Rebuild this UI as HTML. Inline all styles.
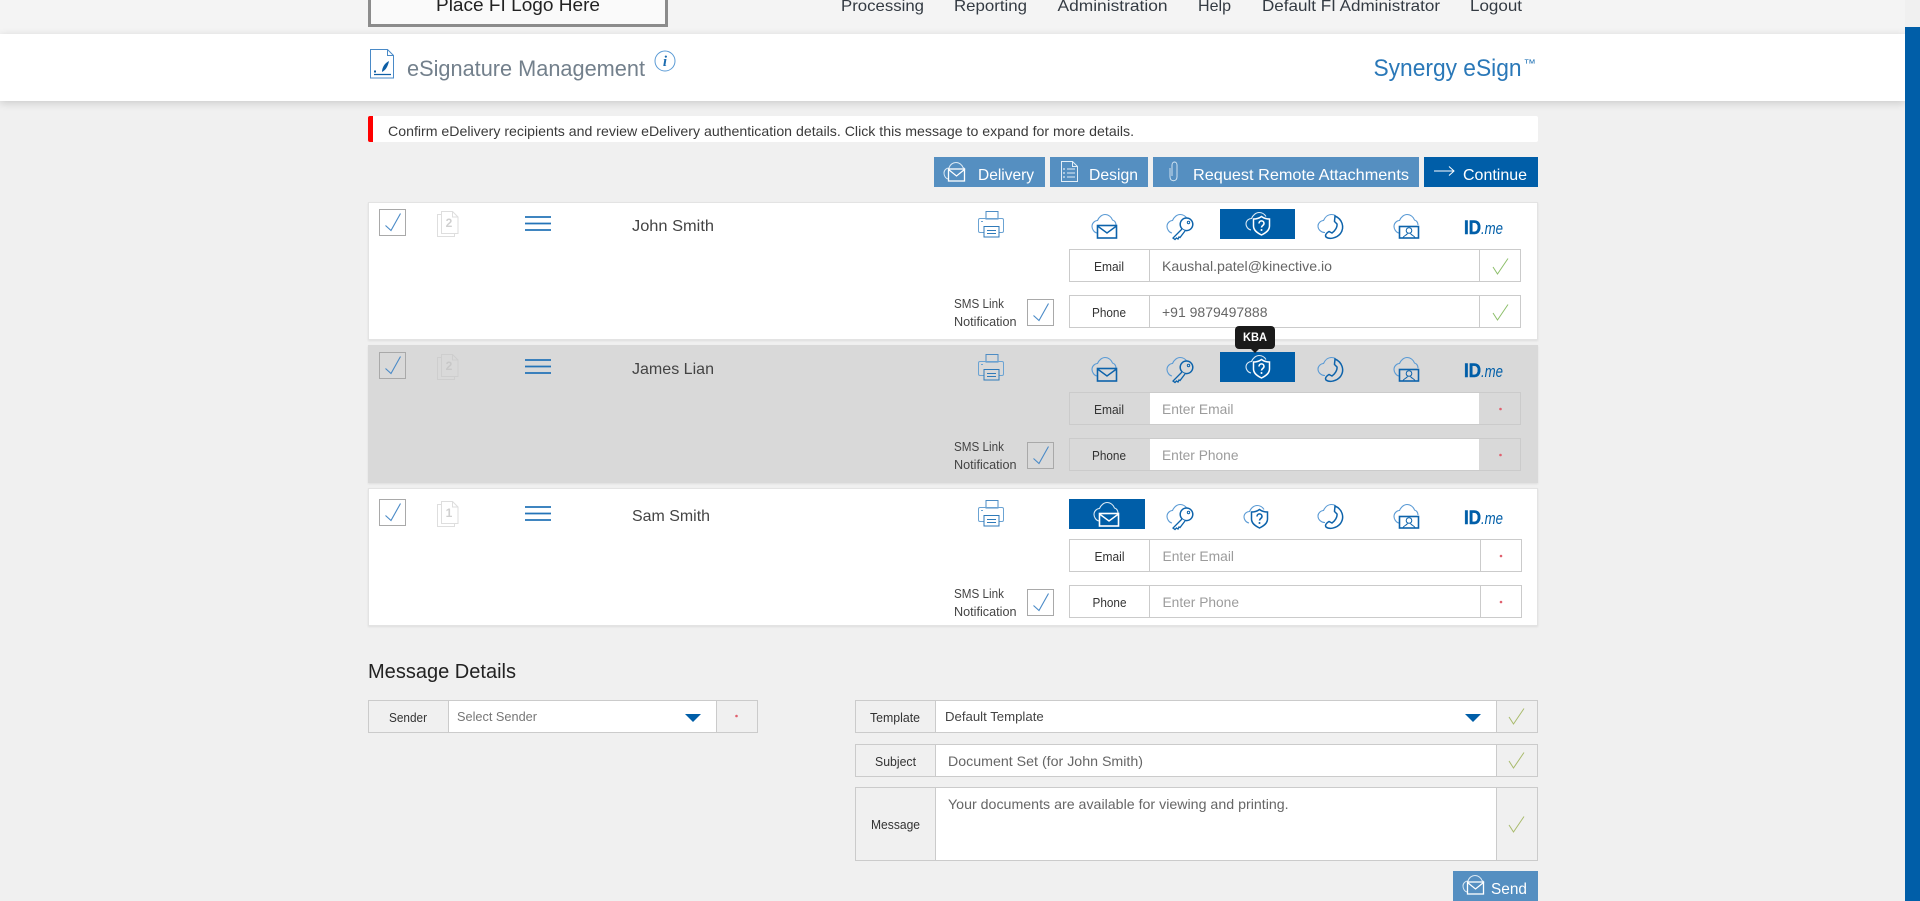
<!DOCTYPE html>
<html lang="en"><head><meta charset="utf-8"><title>eSignature Management</title>
<style>
html,body{margin:0;padding:0;width:1920px;height:901px;overflow:hidden;background:#f0f0f0;font-family:"Liberation Sans",sans-serif}
.b{position:absolute;box-sizing:border-box}
.f{border:1px solid #cbcbcb}
.card{background:#fff;border:1px solid #e3e3e3;box-shadow:0 1px 2px rgba(0,0,0,.08)}
.btn{background:#558fc1;height:30px;top:157px}
.cb{width:27px;height:27px;border:1px solid #a9a9a9}
svg{position:absolute;left:0;top:0}
text{font-family:"Liberation Sans",sans-serif}
.n{font-size:16px;fill:#333a42}
.h{font-size:16px;fill:#444}
.lb{font-size:13px;fill:#333}
.v{font-size:14px;fill:#666}
.p{font-size:14px;fill:#9c9c9c}
.s{font-size:12.5px;fill:#444}
.w{font-size:16px;fill:#fff}
</style></head><body>
<div class="b" style="left:0;top:0;width:1905px;height:34px;background:#f4f4f4"></div>
<div class="b" style="left:368px;top:-10px;width:300px;height:37px;border:3px solid #8c8c8c;background:#fafafa"></div>
<div class="b" style="left:0;top:34px;width:1905px;height:67px;background:#fff;box-shadow:0 2px 8px rgba(0,0,0,.16)"></div>
<div class="b" style="left:1905px;top:0;width:15px;height:27px;background:#f0f0f0"></div>
<div class="b" style="left:1905px;top:27px;width:15px;height:874px;background:#005ea8"></div>
<div class="b" style="left:368px;top:116px;width:1170px;height:26px;background:#fff;border-radius:2px"></div>
<div class="b" style="left:368px;top:116px;width:5px;height:26px;background:#f00;border-radius:2px 0 0 2px"></div>
<div class="b btn" style="left:934px;width:111px"></div>
<div class="b btn" style="left:1050px;width:98px"></div>
<div class="b btn" style="left:1153px;width:266px"></div>
<div class="b btn" style="left:1424px;width:114px;background:#005ea8"></div>

<div class="b card" style="left:368px;top:202px;width:1170px;height:138px"></div>
<div class="b" style="left:368px;top:345px;width:1170px;height:138px;background:#d9d9d9;box-shadow:0 1px 2px rgba(0,0,0,.08)"></div>
<div class="b card" style="left:368px;top:488px;width:1170px;height:138px"></div>

<div class="b cb" style="left:379px;top:209px"></div>
<div class="b cb" style="left:379px;top:352px"></div>
<div class="b cb" style="left:379px;top:499px"></div>
<div class="b cb" style="left:1027px;top:299px"></div>
<div class="b cb" style="left:1027px;top:442px"></div>
<div class="b cb" style="left:1027px;top:589px"></div>

<div class="b" style="left:1220px;top:209px;width:75px;height:30px;background:#005ea8"></div>
<div class="b" style="left:1220px;top:352px;width:75px;height:30px;background:#005ea8"></div>
<div class="b" style="left:1069px;top:499px;width:76px;height:30px;background:#005ea8"></div>

<!-- row 1 fields -->
<div class="b f" style="left:1069px;top:249px;width:452px;height:33px;background:#fff"></div>
<div class="b f" style="left:1069px;top:295px;width:452px;height:33px;background:#fff"></div>
<div class="b" style="left:1149px;top:249px;width:1px;height:33px;background:#cbcbcb"></div>
<div class="b" style="left:1479px;top:249px;width:1px;height:33px;background:#cbcbcb"></div>
<div class="b" style="left:1149px;top:295px;width:1px;height:33px;background:#cbcbcb"></div>
<div class="b" style="left:1479px;top:295px;width:1px;height:33px;background:#cbcbcb"></div>
<!-- row 2 fields -->
<div class="b f" style="left:1069px;top:392px;width:452px;height:33px"></div>
<div class="b f" style="left:1069px;top:438px;width:452px;height:33px"></div>
<div class="b" style="left:1150px;top:393px;width:329px;height:31px;background:#fff"></div>
<div class="b" style="left:1150px;top:439px;width:329px;height:31px;background:#fff"></div>
<!-- row 3 fields -->
<div class="b f" style="left:1069px;top:539px;width:453px;height:33px;background:#fff"></div>
<div class="b f" style="left:1069px;top:585px;width:453px;height:33px;background:#fff"></div>
<div class="b" style="left:1149px;top:539px;width:1px;height:33px;background:#cbcbcb"></div>
<div class="b" style="left:1480px;top:539px;width:1px;height:33px;background:#cbcbcb"></div>
<div class="b" style="left:1149px;top:585px;width:1px;height:33px;background:#cbcbcb"></div>
<div class="b" style="left:1480px;top:585px;width:1px;height:33px;background:#cbcbcb"></div>
<!-- message fields -->
<div class="b f" style="left:368px;top:700px;width:390px;height:33px"></div>
<div class="b" style="left:448px;top:700px;width:269px;height:33px;background:#fff;border:1px solid #cbcbcb"></div>
<div class="b f" style="left:855px;top:700px;width:683px;height:33px"></div>
<div class="b" style="left:935px;top:700px;width:562px;height:33px;background:#fff;border:1px solid #cbcbcb"></div>
<div class="b f" style="left:855px;top:744px;width:683px;height:33px"></div>
<div class="b" style="left:935px;top:744px;width:562px;height:33px;background:#fff;border:1px solid #cbcbcb"></div>
<div class="b f" style="left:855px;top:787px;width:683px;height:74px"></div>
<div class="b" style="left:935px;top:787px;width:562px;height:74px;background:#fff;border:1px solid #cbcbcb"></div>
<div class="b" style="left:1453px;top:871px;width:85px;height:30px;background:#558fc1"></div>
<!-- tooltip -->
<div class="b" style="left:1235px;top:326px;width:40px;height:23px;background:#1a1a1a;border-radius:4px"></div>
<div class="b" style="left:1251px;top:349px;width:0;height:0;border-left:4px solid transparent;border-right:4px solid transparent;border-top:4px solid #1a1a1a"></div>

<svg width="1920" height="901" viewBox="0 0 1920 901" fill="none">
<defs>
<symbol id="mail" overflow="visible"><path d="M5 20C2 19.500 0 16 0 13.500 0 10 3 7.500 5.500 7.500 7 4 10 1.500 13 1.500c3.500 0 6.500 2.500 7.500 5.500 2 .5 3.500 2.500 3.500 5" stroke="var(--a)" stroke-width="1.100"/><rect x="5.500" y="12.500" width="19" height="12.500" stroke="var(--b)" stroke-width="1.600" fill="var(--f)"/><path d="M5.500 13L15 20l9.500-7" stroke="var(--b)" stroke-width="1.400"/></symbol>
<symbol id="key" overflow="visible"><path d="M5 20C2 19.500 0 16 0 13.500 0 10 3 7.500 5.500 7.500 7 4 10 1.500 13 1.500c3 0 5.500 1.500 7 4" stroke="var(--a)" stroke-width="1.100"/><circle cx="19.500" cy="11.300" r="6.300" stroke="var(--b)" stroke-width="1.500" fill="var(--f)"/><circle cx="21.500" cy="9.500" r="1.200" stroke="var(--b)"/><path d="M15 16L6 25l2 1.500 1.500-1.500 1.500 1 1-2 1 .5 5-6.500" stroke="var(--b)" stroke-width="1.300" fill="var(--f)"/></symbol>
<symbol id="kba" overflow="visible"><path d="M5 18C2 17.500 0 14.500 0 12 0 8.500 3 6.500 5.500 6.500 7 3 10 .5 13 .5c3 0 5.500 1.500 7 4" stroke="var(--a)" stroke-width="1.100"/><path d="M15.500 4.500c2 1.500 5 2.500 8 2.500v7c0 4-3 6.500-8 9-5-2.500-8-5-8-9V7c3 0 6-1 8-2.500z" stroke="var(--b)" stroke-width="1.500" fill="var(--f)"/><path d="M13 11.500c0-3.500 5-3.500 5 0 0 2-2.500 2-2.500 4" stroke="var(--b)" stroke-width="1.600"/><circle cx="15.500" cy="18" r="1" fill="var(--b)"/></symbol>
<symbol id="tel" overflow="visible"><path d="M7 19.500C3 19.500 0 16.500 0 13 0 10 3 7.500 5.500 7.500 7 4 10 1.500 13.500 1.500c1.500 0 3 .5 4 1" stroke="var(--a)" stroke-width="1.100"/><path d="M17 3c7 3 10 11 5.500 17.500C18.500 25.500 11 26.500 8 24c-1.500-2 1-4.500 3-5.500l3 1.500c3-2 5.500-6 5-9l-2.500-2.500c0-2 .5-4 .5-5.500z" stroke="var(--b)" stroke-width="1.500" fill="var(--f)"/></symbol>
<symbol id="usr" overflow="visible"><path d="M5 20C2 19.500 0 16 0 13.500 0 10 3 7.500 5.500 7.500 7 4 10 1.500 13 1.500c3.500 0 6.500 2.500 7.500 5.500 2 .5 3.500 2.500 3.500 5" stroke="var(--a)" stroke-width="1.100"/><rect x="5.500" y="13.500" width="19" height="11.500" stroke="var(--b)" stroke-width="1.600" fill="var(--f)"/><circle cx="15" cy="17.500" r="2.800" stroke="var(--b)"/><path d="M9 25c.5-2.500 3.500-2.500 4.500-4.500m7.500 4.500c-.5-2.500-3.500-2.500-4.500-4.500" stroke="var(--b)"/></symbol>
<symbol id="prn" overflow="visible"><rect x="8" y=".5" width="12" height="7.500" stroke="#4d8cc4"/><rect x=".5" y="7.500" width="25" height="14" rx="1.500" stroke="#6ba3d3"/><rect x="6" y="15.500" width="15" height="10.500" fill="var(--f)" stroke="#2f7ab9"/><path d="M9 19.500h9M9 22.500h9" stroke="#2f7ab9"/><path d="M3 10.500h2" stroke="#6ba3d3"/></symbol>
<symbol id="ham" overflow="visible"><path d="M0 1h26M0 7.500h26M0 14h26" stroke="#2474b8" stroke-width="1.800"/></symbol>
<symbol id="chk" overflow="visible"><path d="M6.500 16.500l5.500 5L21.500 4.500" stroke="#4a8ac7" stroke-width="1.100"/></symbol>
<symbol id="ok" overflow="visible"><path d="M0 9l4.500 7L15 .5" stroke="var(--g)" stroke-width="1"/></symbol>
<symbol id="wmail" overflow="visible"><path d="M4 17C1.500 16.500 0 13.500 0 11 0 8 2.500 6 5 6 6 2.500 9 .5 12 .5c3.500 0 6 2.500 7 5 1 .5 1.500 1 2 2" stroke="#dbe9f4"/><rect x="4.500" y="7" width="16" height="12" stroke="#fff" stroke-width="1.300" fill="#558fc1"/><path d="M4.500 7.500l8 6.500 8-6.500" stroke="#fff" stroke-width="1.200"/></symbol>
</defs>

<g font-family="Liberation Sans">
<text x="436" y="11" textLength="164" lengthAdjust="spacingAndGlyphs" font-size="18" fill="#222">Place FI Logo Here</text>
<text class="n" x="841" y="11" textLength="83" lengthAdjust="spacingAndGlyphs">Processing</text>
<text class="n" x="954" y="11" textLength="73" lengthAdjust="spacingAndGlyphs">Reporting</text>
<text class="n" x="1057.500" y="11" textLength="110" lengthAdjust="spacingAndGlyphs">Administration</text>
<text class="n" x="1198" y="11" textLength="33" lengthAdjust="spacingAndGlyphs">Help</text>
<text class="n" x="1262" y="11" textLength="178" lengthAdjust="spacingAndGlyphs">Default FI Administrator</text>
<text class="n" x="1470" y="11" textLength="52" lengthAdjust="spacingAndGlyphs">Logout</text>

<text x="407" y="76" textLength="238" lengthAdjust="spacingAndGlyphs" font-size="22" fill="#73808c">eSignature Management</text>
<text x="1373.500" y="76" textLength="148" lengthAdjust="spacingAndGlyphs" font-size="24" fill="#2a78b8">Synergy eSign</text>
<text x="1523.500" y="67" textLength="12.500" lengthAdjust="spacingAndGlyphs" font-size="11" fill="#2a78b8">™</text>

<text x="388" y="136" textLength="746" lengthAdjust="spacingAndGlyphs" font-size="14" fill="#3a3a3a">Confirm eDelivery recipients and review eDelivery authentication details. Click this message to expand for more details.</text>

<text class="w" x="978" y="180" textLength="56" lengthAdjust="spacingAndGlyphs">Delivery</text>
<text class="w" x="1089" y="180" textLength="49" lengthAdjust="spacingAndGlyphs">Design</text>
<text class="w" x="1193" y="180" textLength="216" lengthAdjust="spacingAndGlyphs">Request Remote Attachments</text>
<text class="w" x="1463" y="180" textLength="64" lengthAdjust="spacingAndGlyphs">Continue</text>

<text class="h" x="632" y="231" textLength="82" lengthAdjust="spacingAndGlyphs">John Smith</text>
<text class="h" x="632" y="374" textLength="82" lengthAdjust="spacingAndGlyphs">James Lian</text>
<text class="h" x="632" y="521" textLength="78" lengthAdjust="spacingAndGlyphs">Sam Smith</text>

<text class="lb" x="1094" y="271" textLength="30" lengthAdjust="spacingAndGlyphs">Email</text>
<text class="lb" x="1092" y="317" textLength="34" lengthAdjust="spacingAndGlyphs">Phone</text>
<text class="lb" x="1094" y="414" textLength="30" lengthAdjust="spacingAndGlyphs">Email</text>
<text class="lb" x="1092" y="460" textLength="34" lengthAdjust="spacingAndGlyphs">Phone</text>
<text class="lb" x="1094.500" y="561" textLength="30" lengthAdjust="spacingAndGlyphs">Email</text>
<text class="lb" x="1092.500" y="607" textLength="34" lengthAdjust="spacingAndGlyphs">Phone</text>

<text class="v" x="1162" y="271" textLength="170" lengthAdjust="spacingAndGlyphs">Kaushal.patel@kinective.io</text>
<text class="v" x="1162" y="317" textLength="105.500" lengthAdjust="spacingAndGlyphs">+91 9879497888</text>
<text class="p" x="1162" y="414" textLength="71.500" lengthAdjust="spacingAndGlyphs">Enter Email</text>
<text class="p" x="1162" y="460" textLength="76.500" lengthAdjust="spacingAndGlyphs">Enter Phone</text>
<text class="p" x="1162.500" y="561" textLength="71.500" lengthAdjust="spacingAndGlyphs">Enter Email</text>
<text class="p" x="1162.500" y="607" textLength="76.500" lengthAdjust="spacingAndGlyphs">Enter Phone</text>

<text class="s" x="954" y="308" textLength="50" lengthAdjust="spacingAndGlyphs">SMS Link</text>
<text class="s" x="954" y="326" textLength="62.500" lengthAdjust="spacingAndGlyphs">Notification</text>
<text class="s" x="954" y="451" textLength="50" lengthAdjust="spacingAndGlyphs">SMS Link</text>
<text class="s" x="954" y="469" textLength="62.500" lengthAdjust="spacingAndGlyphs">Notification</text>
<text class="s" x="954" y="598" textLength="50" lengthAdjust="spacingAndGlyphs">SMS Link</text>
<text class="s" x="954" y="616" textLength="62.500" lengthAdjust="spacingAndGlyphs">Notification</text>

<text x="1243" y="341" textLength="24" lengthAdjust="spacingAndGlyphs" font-size="12" font-weight="bold" fill="#fff">KBA</text>

<text x="368" y="678" textLength="148" lengthAdjust="spacingAndGlyphs" font-size="20" fill="#222">Message Details</text>
<text class="lb" x="389" y="722" textLength="38" lengthAdjust="spacingAndGlyphs" fill="#222">Sender</text>
<text x="457" y="721" textLength="80" lengthAdjust="spacingAndGlyphs" font-size="13" fill="#777">Select Sender</text>
<text class="lb" x="870" y="722" textLength="50" lengthAdjust="spacingAndGlyphs">Template</text>
<text x="945" y="721" textLength="98.700" lengthAdjust="spacingAndGlyphs" font-size="13" fill="#444">Default Template</text>
<text class="lb" x="875" y="766" textLength="41" lengthAdjust="spacingAndGlyphs">Subject</text>
<text class="v" x="948" y="766" textLength="195" lengthAdjust="spacingAndGlyphs">Document Set (for John Smith)</text>
<text class="lb" x="871" y="829" textLength="49" lengthAdjust="spacingAndGlyphs">Message</text>
<text class="v" x="948" y="809" textLength="340.600" lengthAdjust="spacingAndGlyphs">Your documents are available for viewing and printing.</text>
<text class="w" x="1491" y="894" textLength="36" lengthAdjust="spacingAndGlyphs">Send</text>

<!-- ID.me -->
<g fill="#005ea8" stroke="#005ea8" stroke-width=".5">
<text x="1464" y="234" textLength="17" lengthAdjust="spacingAndGlyphs" font-size="19" font-weight="bold">ID</text>
<text x="1464" y="377" textLength="17" lengthAdjust="spacingAndGlyphs" font-size="19" font-weight="bold">ID</text>
<text x="1464" y="524" textLength="17" lengthAdjust="spacingAndGlyphs" font-size="19" font-weight="bold">ID</text>
</g>
<g fill="#005ea8">
<text x="1481" y="234" textLength="22" lengthAdjust="spacingAndGlyphs" font-size="17" font-style="italic">.me</text>
<text x="1481" y="377" textLength="22" lengthAdjust="spacingAndGlyphs" font-size="17" font-style="italic">.me</text>
<text x="1481" y="524" textLength="22" lengthAdjust="spacingAndGlyphs" font-size="17" font-style="italic">.me</text>
</g>
</g>

<!-- header icons -->
<g stroke-width="1">
<path d="M370.500 49.500h17l6 6v22.500h-23z" stroke="#4a8ac7"/><path d="M387.500 49.500v6h6" stroke="#4a8ac7"/>
<path d="M382 72c0-5 3-9 7-11-1 5-3 9-7 11z" fill="#0d5ea5"/><path d="M374 74.500h17" stroke="#0d5ea5" stroke-width="1.300"/><path d="M374 71.500h2" stroke="#0d5ea5" stroke-width="2"/>
<circle cx="665" cy="61" r="10" stroke="#5b9bd5"/>
</g>
<text x="665" y="66" text-anchor="middle" style="font-family:'Liberation Serif',serif" font-size="15" font-style="italic" font-weight="bold" fill="#1c6cb0">i</text>

<!-- button icons -->
<use href="#wmail" x="944" y="162"/>
<use href="#wmail" x="1463" y="875"/>
<g stroke="#e3eef7" stroke-width="1">
<path d="M1061.500 161.500h11l5 5v15h-16zM1072.500 161.500v5h5"/>
<path d="M1067 169h8M1067 173h8M1067 177h8"/><path d="M1063 169h2M1063 173h2M1063 177h2" stroke="#fff"/>
<path d="M1170 168v9c0 5 7 5 7 0v-12c0-4-5-4-5 0v11" stroke="#dcebf6" stroke-width=".9"/>
<path d="M1434 171h20M1449 166.500l5 4.500-5 4.500" stroke="#fff"/>
</g>

<!-- checkbox ticks -->
<use href="#chk" x="379" y="209"/><use href="#chk" x="379" y="352"/><use href="#chk" x="379" y="499"/>
<use href="#chk" x="1027" y="299"/><use href="#chk" x="1027" y="442"/><use href="#chk" x="1027" y="589"/>

<!-- doc count icons -->
<g stroke="#dedede" fill="#fff"><path d="M437.500 214.500h4v19h13v3h-17z" fill="none"/><path d="M441.500 211.500h11l5.500 5.500v16.500h-16.500z"/><path d="M452.500 211.500v5.500h5.500" fill="none"/></g>
<text x="449" y="227" text-anchor="middle" font-size="12" font-weight="bold" fill="#d0d0d0">2</text>
<g stroke="#cecece"><path d="M437.500 357.500h4v19h13v3h-17z"/><path d="M441.500 354.500h11l5.500 5.500v16.500h-16.500z"/><path d="M452.500 354.500v5.500h5.500"/></g>
<text x="449" y="370" text-anchor="middle" font-size="12" font-weight="bold" fill="#c8c8c8">2</text>
<g stroke="#dedede" fill="#fff"><path d="M437.500 504.500h4v19h13v3h-17z" fill="none"/><path d="M441.500 501.500h11l5.500 5.500v16.500h-16.500z"/><path d="M452.500 501.500v5.500h5.500" fill="none"/></g>
<text x="449" y="517" text-anchor="middle" font-size="12" font-weight="bold" fill="#d0d0d0">1</text>

<!-- hamburger -->
<use href="#ham" x="525" y="216"/><use href="#ham" x="525" y="359"/><use href="#ham" x="525" y="506"/>

<!-- printers -->
<use href="#prn" x="978" y="211" style="--f:#fff"/><use href="#prn" x="978" y="354" style="--f:#d9d9d9"/><use href="#prn" x="978" y="500" style="--f:#fff"/>

<!-- delivery icons row 1 -->
<g style="--a:#5b9bd5;--b:#0d63ab;--f:#fff">
<use href="#mail" x="1092" y="213"/><use href="#key" x="1167" y="213"/><use href="#tel" x="1318" y="213"/><use href="#usr" x="1394" y="213"/>
</g>
<use href="#kba" x="1246" y="212" style="--a:#dbe9f4;--b:#fff;--f:#005ea8"/>
<!-- row 2 -->
<g style="--a:#5b9bd5;--b:#0d63ab;--f:#d9d9d9">
<use href="#mail" x="1092" y="356"/><use href="#key" x="1167" y="356"/><use href="#tel" x="1318" y="356"/><use href="#usr" x="1394" y="356"/>
</g>
<use href="#kba" x="1246" y="355" style="--a:#dbe9f4;--b:#fff;--f:#005ea8"/>
<!-- row 3 -->
<use href="#mail" x="1094" y="501" style="--a:#dbe9f4;--b:#fff;--f:#005ea8"/>
<g style="--a:#5b9bd5;--b:#0d63ab;--f:#fff">
<use href="#key" x="1167" y="503"/><use href="#kba" x="1244" y="505"/><use href="#tel" x="1318" y="503"/><use href="#usr" x="1394" y="503"/>
</g>

<!-- green ticks -->
<g style="--g:#8dbf6a"><use href="#ok" x="1493" y="258"/><use href="#ok" x="1493" y="304"/></g>
<g style="--g:#a9bb6c"><use href="#ok" x="1509" y="708"/><use href="#ok" x="1509" y="752"/><use href="#ok" x="1509" y="816"/></g>

<!-- required dots -->
<g fill="#e0606e"><circle cx="1500.500" cy="409" r="1.300"/><circle cx="1500.500" cy="455" r="1.300"/><circle cx="1501" cy="556" r="1.300"/><circle cx="1501" cy="602" r="1.300"/><circle cx="736.500" cy="716" r="1.300"/></g>

<!-- dropdown arrows -->
<path d="M685 714h16l-8 8z" fill="#005ea8"/><path d="M1465 714h16l-8 8z" fill="#005ea8"/>
</svg>
</body></html>
